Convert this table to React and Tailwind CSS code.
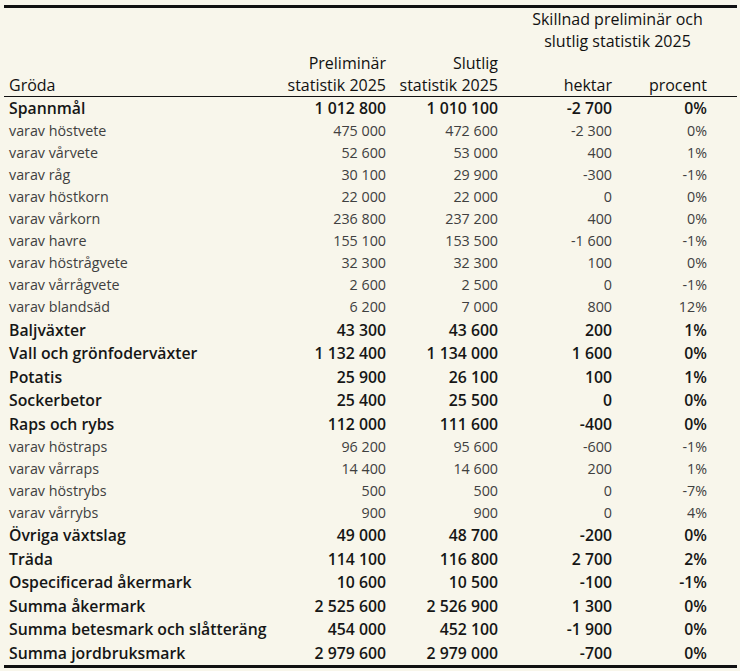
import React from "react";

const rows = [
  ["Spannmål", "1 012 800", "1 010 100", "-2 700", "0%", true],
  ["varav höstvete", "475 000", "472 600", "-2 300", "0%"],
  ["varav vårvete", "52 600", "53 000", "400", "1%"],
  ["varav råg", "30 100", "29 900", "-300", "-1%"],
  ["varav höstkorn", "22 000", "22 000", "0", "0%"],
  ["varav vårkorn", "236 800", "237 200", "400", "0%"],
  ["varav havre", "155 100", "153 500", "-1 600", "-1%"],
  ["varav höstrågvete", "32 300", "32 300", "100", "0%"],
  ["varav vårrågvete", "2 600", "2 500", "0", "-1%"],
  ["varav blandsäd", "6 200", "7 000", "800", "12%"],
  ["Baljväxter", "43 300", "43 600", "200", "1%", true],
  ["Vall och grönfoderväxter", "1 132 400", "1 134 000", "1 600", "0%", true],
  ["Potatis", "25 900", "26 100", "100", "1%", true],
  ["Sockerbetor", "25 400", "25 500", "0", "0%", true],
  ["Raps och rybs", "112 000", "111 600", "-400", "0%", true],
  ["varav höstraps", "96 200", "95 600", "-600", "-1%"],
  ["varav vårraps", "14 400", "14 600", "200", "1%"],
  ["varav höstrybs", "500", "500", "0", "-7%"],
  ["varav vårrybs", "900", "900", "0", "4%"],
  ["Övriga växtslag", "49 000", "48 700", "-200", "0%", true],
  ["Träda", "114 100", "116 800", "2 700", "2%", true],
  ["Ospecificerad åkermark", "10 600", "10 500", "-100", "-1%", true],
  ["Summa åkermark", "2 525 600", "2 526 900", "1 300", "0%", true],
  ["Summa betesmark och slåtteräng", "454 000", "452 100", "-1 900", "0%", true],
  ["Summa jordbruksmark", "2 979 600", "2 979 000", "-700", "0%", true],
];

export default function App() {
  return (
    <div
      className="w-[740px] h-[671px] bg-[#f8f6eb] pt-[5px] pl-[4px]"
      style={{ fontFamily: '"Open Sans", "DejaVu Sans", sans-serif' }}
    >
      <div className="w-[733px] border-t-[3px] border-b-[3px] border-[#111]">
        <div className="grid grid-cols-[260px_122px_112px_114px_95px_30px] text-[16px] leading-[22px] text-[#111] border-b-[1.5px] border-[#111]">
          <div className="col-span-3 h-[44px]"></div>
          <div className="col-span-3 text-center whitespace-nowrap">
            <div>Skillnad preliminär och</div>
            <div>slutlig statistik 2025</div>
          </div>
          <div className="flex flex-col justify-end pl-[5px] h-[44px]">
            <div>Gröda</div>
          </div>
          <div className="text-right whitespace-nowrap">
            <div>Preliminär</div>
            <div>statistik 2025</div>
          </div>
          <div className="text-right whitespace-nowrap">
            <div>Slutlig</div>
            <div>statistik 2025</div>
          </div>
          <div className="flex flex-col justify-end text-right">
            <div>hektar</div>
          </div>
          <div className="flex flex-col justify-end text-right">
            <div>procent</div>
          </div>
          <div></div>
        </div>
        <div>
          {rows.map((r, i) => {
            const bold = r[5];
            return (
              <div
                key={i}
                className={
                  bold
                    ? "grid grid-cols-[260px_122px_112px_114px_95px_30px] h-[23.5px] items-center pb-[1px] text-[15.8px] leading-[20px] font-semibold text-[#161616] whitespace-nowrap"
                    : "grid grid-cols-[260px_122px_112px_114px_95px_30px] h-[22px] items-center pb-[1px] text-[14.3px] leading-[20px] text-[#404040] whitespace-nowrap"
                }
              >
                <div className="pl-[5px]">{r[0]}</div>
                <div className="text-right">{r[1]}</div>
                <div className="text-right">{r[2]}</div>
                <div className="text-right">{r[3]}</div>
                <div className="text-right">{r[4]}</div>
                <div></div>
              </div>
            );
          })}
        </div>
      </div>
    </div>
  );
}
